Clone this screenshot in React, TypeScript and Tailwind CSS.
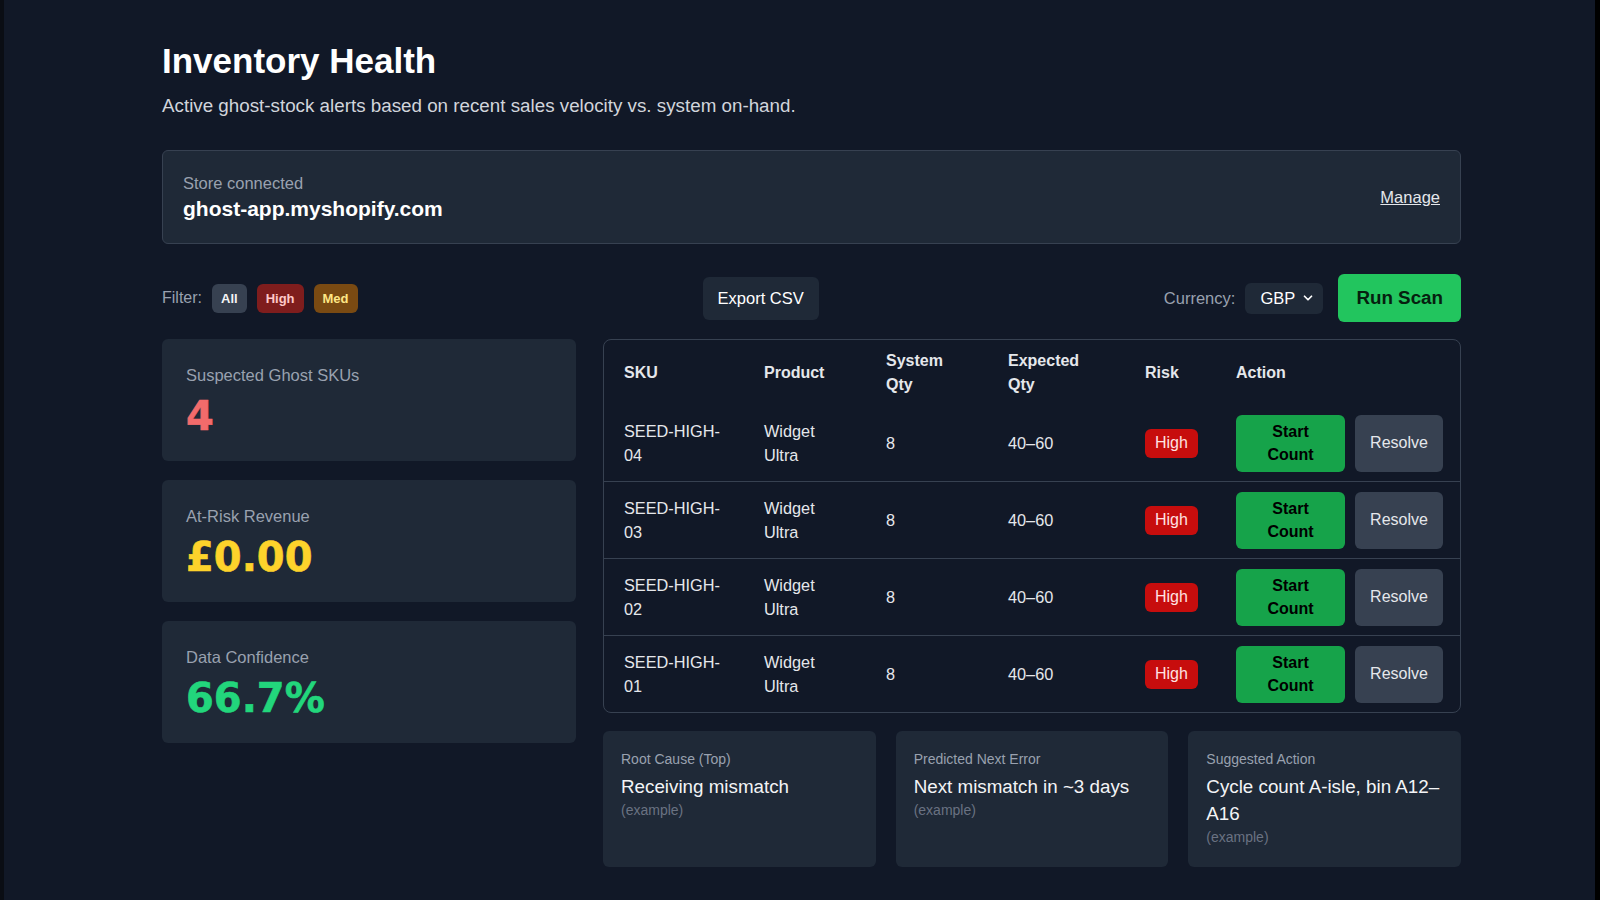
import { ChevronDown } from "lucide-react";

type Row = {
  sku: string;
  product: string;
  systemQty: number;
  expected: string;
  risk: string;
};

const ROWS: Row[] = [
  { sku: "SEED-HIGH-04", product: "Widget Ultra", systemQty: 8, expected: "40–60", risk: "High" },
  { sku: "SEED-HIGH-03", product: "Widget Ultra", systemQty: 8, expected: "40–60", risk: "High" },
  { sku: "SEED-HIGH-02", product: "Widget Ultra", systemQty: 8, expected: "40–60", risk: "High" },
  { sku: "SEED-HIGH-01", product: "Widget Ultra", systemQty: 8, expected: "40–60", risk: "High" },
];

function StatCard({ label, value, color }: { label: string; value: string; color: string }) {
  return (
    <div className="rounded-md bg-[#1f2937] px-6 pt-6 pb-[22px]">
      <div className="text-[16.5px] leading-6 text-gray-400">{label}</div>
      <div
        className={`mt-[6px] font-['DejaVu_Sans',sans-serif] text-[40px] font-bold leading-[46px] [-webkit-text-stroke:0.6px_currentColor] ${color}`}
      >
        {value}
      </div>
    </div>
  );
}

function InsightCard({ label, text }: { label: string; text: string }) {
  return (
    <div className="rounded-md bg-[#1f2937] px-[18px] pt-[18px] pb-5">
      <div className="text-sm leading-5 text-gray-400">{label}</div>
      <div className="mt-1 text-[18.8px] leading-[27px] text-gray-100">{text}</div>
      <div className="text-sm leading-5 text-gray-500">(example)</div>
    </div>
  );
}

export default function App() {
  return (
    <div className="min-h-screen border-l-4 border-r-[5px] border-l-[#0a0d14] border-r-black bg-[#111827] font-['Liberation_Sans',Arial,sans-serif]">
      <div className="ml-[158px] w-[1299px] pt-10 pb-[35px]">
        <h1 className="text-[35px] font-bold leading-[42px] text-white">Inventory Health</h1>
        <p className="mt-[10px] text-[18.8px] leading-7 text-gray-300">
          Active ghost-stock alerts based on recent sales velocity vs. system on-hand.
        </p>

        {/* store */}
        <div className="mt-[30px] flex items-center justify-between rounded-md border border-[#374151] bg-[#1f2937] p-5">
          <div>
            <div className="text-[16.5px] leading-6 text-gray-400">Store connected</div>
            <div className="text-[21px] font-bold leading-7 text-white">ghost-app.myshopify.com</div>
          </div>
          <a href="#" className="text-[16.5px] leading-6 text-gray-200 underline">
            Manage
          </a>
        </div>

        {/* toolbar */}
        <div className="mt-[30px] flex items-center justify-between">
          <div className="flex items-center gap-2.5">
            <span className="text-base text-gray-400">Filter:</span>
            <button className="rounded-md bg-[#374151] px-[9px] py-[5px] text-[13px] font-bold leading-[19px] text-gray-100">
              All
            </button>
            <button className="rounded-md bg-[#7f1d1d] px-[9px] py-[5px] text-[13px] font-bold leading-[19px] text-red-200">
              High
            </button>
            <button className="rounded-md bg-[#7a4a12] px-[9px] py-[5px] text-[13px] font-bold leading-[19px] text-amber-200">
              Med
            </button>
          </div>
          <button className="h-[43px] rounded-md bg-[#1f2937] px-[15px] text-[16.5px] text-white">Export CSV</button>
          <div className="flex items-center">
            <span className="text-[16.5px] text-gray-400">Currency:</span>
            <div className="ml-2.5 flex h-[31px] w-[78px] items-center justify-between rounded-md bg-[#1f2937] pl-[15px] pr-2 text-[16.5px] text-white">
              GBP
              <ChevronDown className="h-3.5 w-3.5" strokeWidth={3} />
            </div>
            <button className="ml-[15px] h-12 rounded-md bg-[#22c55e] px-[18px] text-[18.8px] font-bold text-[#06200f]">
              Run Scan
            </button>
          </div>
        </div>

        <div className="mt-[17px] grid grid-cols-[414px_1fr] items-start gap-[27px]">
          <div className="flex flex-col gap-[19px]">
            <StatCard label="Suspected Ghost SKUs" value="4" color="text-[#f26b6b]" />
            <StatCard label="At-Risk Revenue" value="£0.00" color="text-[#fdd32b]" />
            <StatCard label="Data Confidence" value="66.7%" color="text-[#22d67c]" />
          </div>

          <div>
            <div className="overflow-hidden rounded-lg border border-[#374151]">
              <table className="w-full table-fixed border-collapse text-left">
                <colgroup>
                  <col className="w-[140px]" />
                  <col className="w-[122px]" />
                  <col className="w-[122px]" />
                  <col className="w-[137px]" />
                  <col className="w-[91px]" />
                  <col />
                </colgroup>
                <thead>
                  <tr className="text-gray-200">
                    <th className="px-5 pt-[9px] pb-2 align-middle font-bold leading-6">SKU</th>
                    <th className="px-5 pt-[9px] pb-2 align-middle font-bold leading-6">Product</th>
                    <th className="px-5 pt-[9px] pb-2 align-middle font-bold leading-6">System Qty</th>
                    <th className="px-5 pt-[9px] pb-2 align-middle font-bold leading-6">Expected Qty</th>
                    <th className="px-5 pt-[9px] pb-2 align-middle font-bold leading-6">Risk</th>
                    <th className="px-5 pt-[9px] pb-2 align-middle font-bold leading-6">Action</th>
                  </tr>
                </thead>
                <tbody className="divide-y divide-[#374151]">
                  {ROWS.map((r) => (
                    <tr key={r.sku} className="text-gray-200">
                      <td className="px-5 py-[9.5px] align-middle text-[16.3px] leading-6">{r.sku}</td>
                      <td className="px-5 py-[9.5px] align-middle text-[16.3px] leading-6">{r.product}</td>
                      <td className="px-5 py-[9.5px] align-middle text-[16.3px] leading-6">{r.systemQty}</td>
                      <td className="px-5 py-[9.5px] align-middle text-[16.3px] leading-6">{r.expected}</td>
                      <td className="px-5 py-[9.5px] align-middle">
                        <span className="inline-block rounded-md bg-[#c70d0d] px-2.5 py-[2.5px] leading-6 text-red-100">
                          {r.risk}
                        </span>
                      </td>
                      <td className="py-[9.5px] pl-5 align-middle">
                        <div className="flex gap-2.5">
                          <button className="h-[57px] w-[109px] shrink-0 rounded-md bg-[#16a34a] px-4 font-bold leading-[23px] text-black">
                            Start Count
                          </button>
                          <button className="h-[57px] w-[88px] shrink-0 rounded-md bg-[#374151] text-gray-200">
                            Resolve
                          </button>
                        </div>
                      </td>
                    </tr>
                  ))}
                </tbody>
              </table>
            </div>

            <div className="mt-[18px] grid grid-cols-3 gap-5">
              <InsightCard label="Root Cause (Top)" text="Receiving mismatch" />
              <InsightCard label="Predicted Next Error" text="Next mismatch in ~3 days" />
              <InsightCard label="Suggested Action" text="Cycle count A-isle, bin A12–A16" />
            </div>
          </div>
        </div>
      </div>
    </div>
  );
}
